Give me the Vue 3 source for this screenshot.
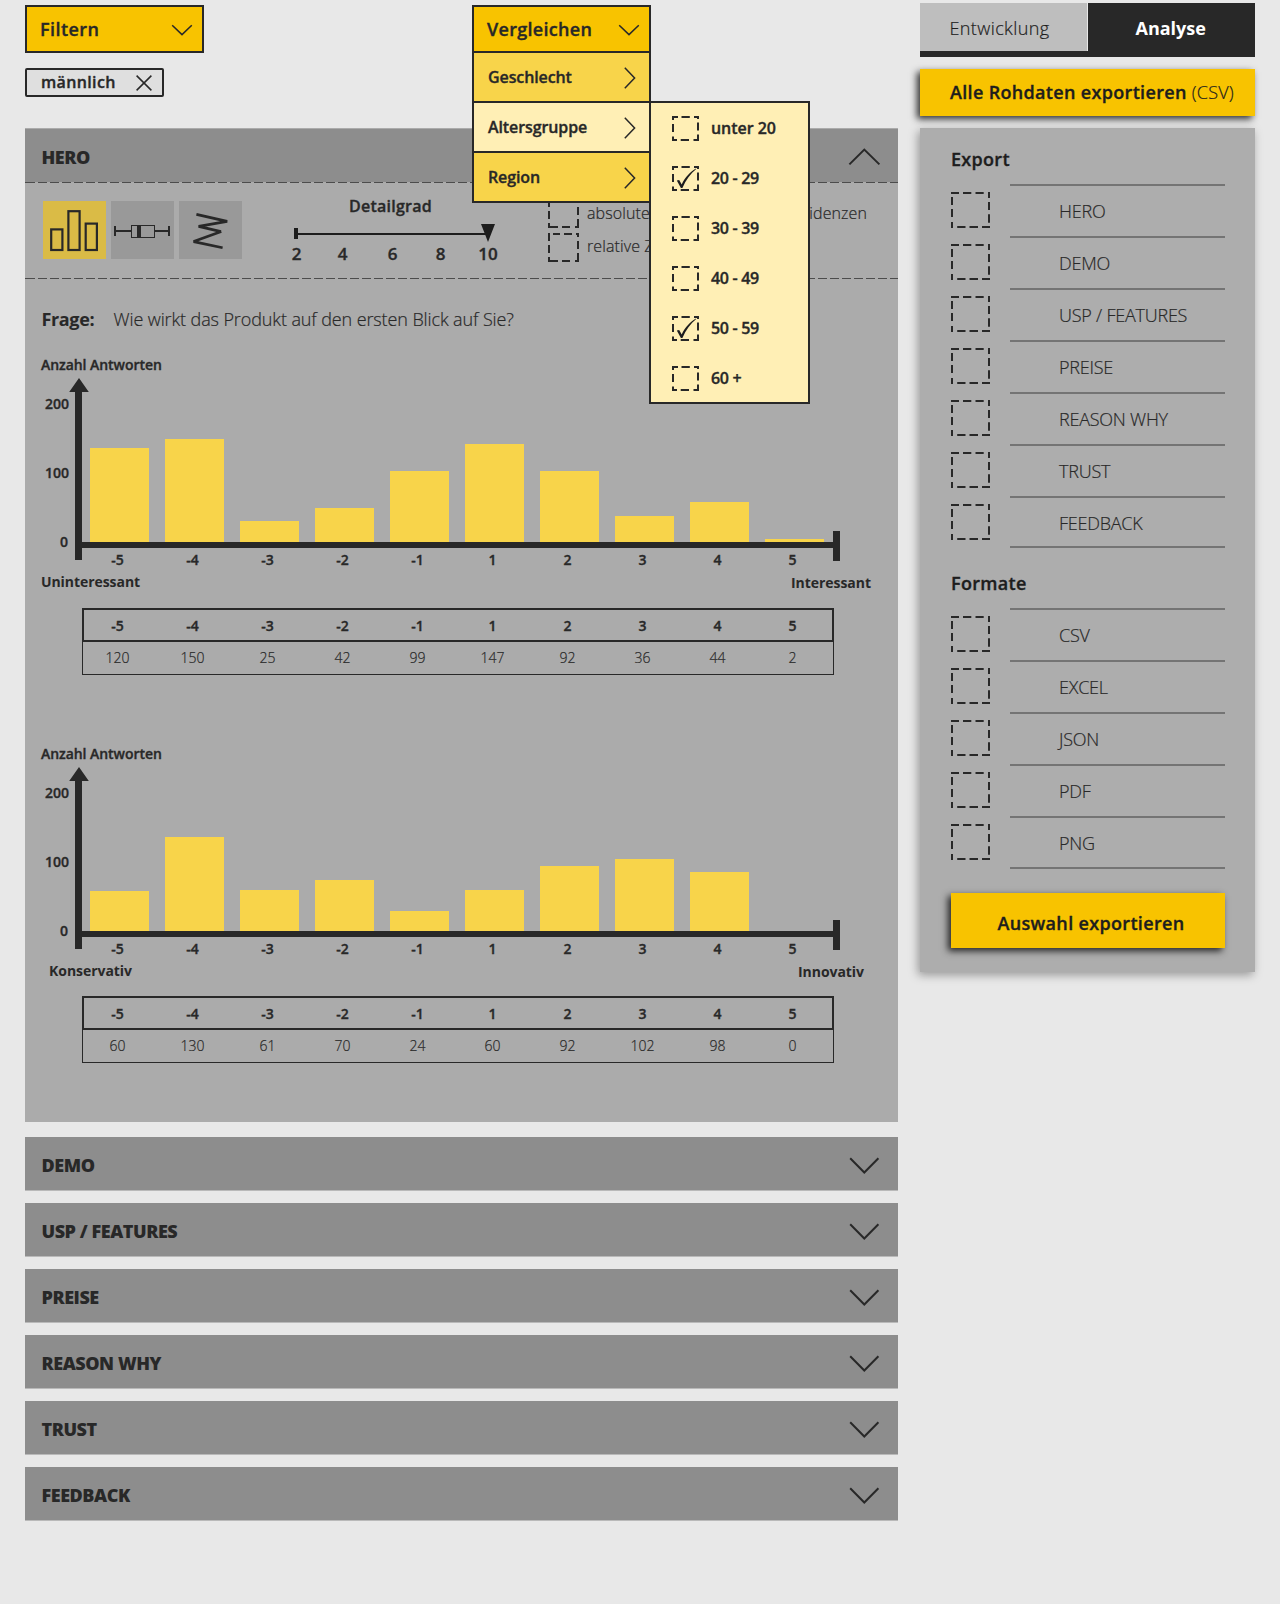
<script setup>
const sections = ['DEMO', 'USP / FEATURES', 'PREISE', 'REASON WHY', 'TRUST', 'FEEDBACK']
const exportItems = ['HERO', ...sections]
const formats = ['CSV', 'EXCEL', 'JSON', 'PDF', 'PNG']
const scale = ['-5', '-4', '-3', '-2', '-1', '1', '2', '3', '4', '5']
const compareItems = [
  { label: 'Geschlecht', open: false },
  { label: 'Altersgruppe', open: true },
  { label: 'Region', open: false },
]
const ages = [
  { label: 'unter 20', on: false },
  { label: '20 - 29', on: true },
  { label: '30 - 39', on: false },
  { label: '40 - 49', on: false },
  { label: '50 - 59', on: true },
  { label: '60 +', on: false },
]
const charts = [
  {
    left: 'Uninteressant',
    right: 'Interessant',
    bars: [94, 103, 21, 34, 71, 98, 71, 26, 40, 3],
    values: [120, 150, 25, 42, 99, 147, 92, 36, 44, 2],
  },
  {
    left: 'Konservativ',
    right: 'Innovativ',
    bars: [40, 94, 41, 51, 20, 41, 65, 72, 59, 0],
    values: [60, 130, 61, 70, 24, 60, 92, 102, 98, 0],
  },
]
const dashedBox =
  'M0 1h8M12 1h8.3M24.5 1h8.2M38 0v6M38 10v8M38 22.3v8.4M39 35h-8M27 35h-8.5M14.5 35h-8.3M1 36v-6M1 25v-8M1 13v-8'
const dashedMedium =
  'M0 1h2M5 1h7M16 1h8M28 1h3M30 0v4M30 8v8M30 20v9M31 28h-4M22 28h-8M10 28h-8M1 29v-5M1 20v-8M1 8v-6'
const dashedSmall =
  'M0 1h6M9.5 1h8.3M22 1h5M26 0v3M26 6.5v8M26 18.5v6.5M27 24h-5.5M17 24h-8.3M5 24h-5M1 25v-4.5M1 16v-8M1 4v-4'
</script>

<template>
  <div class="page">
    <div class="main">
      <header class="toolbar">
        <div class="filter-col">
          <button class="drop filter-btn">
            <span>Filtern</span>
            <svg class="chev" width="22" height="12" viewBox="0 0 22 12"><path d="M1.2 1.2 11 10.6 20.8 1.2" /></svg>
          </button>
          <div class="tag">
            <span>männlich</span>
            <svg width="16" height="16" viewBox="0 0 16 16"><path d="M.6.6 15.4 15.4M15.4.6.6 15.4" /></svg>
          </div>
        </div>
        <div class="compare">
          <button class="drop compare-btn">
            <span>Vergleichen</span>
            <svg class="chev" width="22" height="12" viewBox="0 0 22 12"><path d="M1.2 1.2 11 10.6 20.8 1.2" /></svg>
          </button>
          <div class="menu">
            <div v-for="m in compareItems" :key="m.label" class="menu-item" :class="{ open: m.open }">
              <span>{{ m.label }}</span>
              <svg width="12" height="22" viewBox="0 0 12 22"><path d="M.8.8 10.6 11 .8 21.2" /></svg>
            </div>
            <div class="submenu">
              <div v-for="a in ages" :key="a.label" class="age">
                <svg width="27" height="25" viewBox="0 0 27 25">
                  <path class="dash" :d="dashedSmall" />
                  <path v-if="a.on" class="tick" d="M4.8 14.6 7.2 14 9.7 18.4C13 11.5 18.5 5.6 24 2.6L24.2 3.1C18.6 7.6 13.8 14 10.4 22L8.9 22Z" />
                </svg>
                <span>{{ a.label }}</span>
              </div>
            </div>
          </div>
        </div>
      </header>

      <section class="panel">
        <div class="bar hero-bar">
          <h2>HERO</h2>
          <svg width="34" height="20" viewBox="0 0 34 20"><path d="M2.4 17.4 17.3 2.6 32.4 17.4" /></svg>
        </div>
        <div class="rule"></div>
        <div class="controls">
          <div class="tiles">
            <div class="tile active">
              <svg width="63" height="58" viewBox="0 0 63 58">
                <g fill="none" stroke="#282828" stroke-width="2.2">
                  <rect x="8.2" y="28.4" width="11.2" height="20.6" />
                  <rect x="25.4" y="10.2" width="11.2" height="38.8" />
                  <rect x="42.7" y="22.6" width="11.2" height="26.4" />
                </g>
              </svg>
            </div>
            <div class="tile">
              <svg width="63" height="58" viewBox="0 0 63 58">
                <path d="M4 25v10M58 25v10M4 30h16M44 30h14" fill="none" stroke="#282828" stroke-width="2" />
                <rect x="20.5" y="24.5" width="23" height="12" fill="none" stroke="#282828" />
                <path d="M26 24h4v13h-4z" fill="#282828" />
              </svg>
            </div>
            <div class="tile">
              <svg width="63" height="58" viewBox="0 0 63 58">
                <path d="M17.4 13.4 48.2 20.4 19.6 25.4 42 30.6M42.3 30.6 14.6 40.6 43.6 46.8" fill="none" stroke="#282828" stroke-width="2.7" stroke-linejoin="bevel" />
              </svg>
            </div>
          </div>
          <div class="slider">
            <p>Detailgrad</p>
            <svg width="222" height="18" viewBox="0 0 222 18"><path d="M21 4h4v11h-4zM25 9h190v2H25zM208 0h14l-7 18z" fill="#1d1d1d" /></svg>
            <div class="steps"><span>2</span><span>4</span><span>6</span><span>8</span><span>10</span></div>
          </div>
          <div class="options">
            <div class="option">
              <svg width="31" height="29" viewBox="0 0 31 29"><path class="dash" :d="dashedMedium" /></svg>
              <span>absolute Zahlen</span>
            </div>
            <div class="option">
              <svg width="31" height="29" viewBox="0 0 31 29"><path class="dash" :d="dashedMedium" /></svg>
              <span>relative Zahlen</span>
            </div>
          </div>
          <div class="evidence">Evidenzen</div>
        </div>
        <div class="rule"></div>
        <p class="question"><b>Frage:</b><span>Wie wirkt das Produkt auf den ersten Blick auf Sie?</span></p>

        <figure v-for="c in charts" :key="c.left" class="chart">
          <figcaption>Anzahl Antworten</figcaption>
          <div class="plot">
            <div class="y-labels"><span>200</span><span>100</span><span class="zero">0</span></div>
            <svg class="y-axis" width="20" height="182" viewBox="0 0 20 182"><path d="M10 0 19.8 14H13V182H6V14H.2z" fill="#282828" /></svg>
            <div class="field">
              <div class="bars">
                <div v-for="(h, i) in c.bars" :key="i" class="bar-value" :style="{ height: h + 'px' }"></div>
              </div>
              <div class="ticks"><span v-for="s in scale" :key="s">{{ s }}</span></div>
            </div>
            <div class="end-cap"></div>
          </div>
          <div class="poles"><span>{{ c.left }}</span><span class="right">{{ c.right }}</span></div>
          <div class="table">
            <div class="thead"><span v-for="s in scale" :key="s">{{ s }}</span></div>
            <div class="tbody"><span v-for="(v, i) in c.values" :key="i">{{ v }}</span></div>
          </div>
        </figure>
      </section>

      <div class="accordion">
        <div v-for="s in sections" :key="s" class="bar">
          <h2>{{ s }}</h2>
          <svg width="34" height="20" viewBox="0 0 34 20"><path d="M3.2 3.3 17.3 17.5 31.4 3.3" /></svg>
        </div>
      </div>
    </div>

    <aside>
      <nav class="tabs">
        <a>Entwicklung</a>
        <a class="on">Analyse</a>
      </nav>
      <button class="cta raw"><span>Alle Rohdaten exportieren</span>&nbsp;<i>(CSV)</i></button>
      <div class="export">
        <h3>Export</h3>
        <ul>
          <li v-for="e in exportItems" :key="e">
            <svg width="39" height="36" viewBox="0 0 39 36"><path class="dash" :d="dashedBox" /></svg>
            <span>{{ e }}</span>
          </li>
        </ul>
        <h3>Formate</h3>
        <ul class="formats">
          <li v-for="f in formats" :key="f">
            <svg width="39" height="36" viewBox="0 0 39 36"><path class="dash" :d="dashedBox" /></svg>
            <span>{{ f }}</span>
          </li>
        </ul>
        <button class="cta pick"><span>Auswahl exportieren</span></button>
      </div>
    </aside>
  </div>
</template>

<style>
body { margin: 0; background: #e8e8e8; }
</style>

<style scoped>
* { box-sizing: border-box; margin: 0; padding: 0; }
.page {
  display: flex;
  gap: 22px;
  width: 1280px;
  height: 1604px;
  padding-left: 25px;
  background: #e8e8e8;
  color: #282828;
  font-family: "Open Sans", "Noto Sans", sans-serif;
  -webkit-text-stroke: .2px currentColor;
}
svg { display: block; flex: none; }
button { font: inherit; color: inherit; border: 0; }
.main { width: 873px; }
.dash { fill: none; stroke: #282828; stroke-width: 2; }
.tick { fill: #1d1d1d; }

.drop, .tag, .menu-item, .age, .slider, figcaption, .y-labels, .ticks, .thead, .cta, h3 {
  -webkit-text-stroke-width: .35px;
}
h2, b, .poles, .tabs .on { -webkit-text-stroke-width: 0; }

.toolbar { display: flex; gap: 268px; height: 128px; padding-top: 5px; }
.filter-col { width: 179px; }
.drop {
  display: flex; align-items: center; justify-content: space-between;
  width: 179px; height: 48px; padding: 0 9px 0 13px;
  border: 2px solid #282828; background: #f8c300;
  font-size: 18px; font-weight: 600; letter-spacing: .3px;
}
.filter-btn { letter-spacing: .45px; }
.chev, .menu-item svg, .tag svg { fill: none; stroke: #282828; stroke-width: 1.5; }
.chev { margin-top: 2px; }
.tag {
  display: flex; align-items: center; justify-content: space-between;
  width: 139px; height: 29px; margin-top: 15px; padding: 0 10px 0 14px;
  border: 2px solid #282828; border-radius: 2px; background: #dfdfdf;
  font-size: 16px; font-weight: 600; letter-spacing: .35px;
}
.tag span { line-height: 22px; margin-bottom: 2px; }
.compare { position: relative; z-index: 2; width: 179px; height: 48px; }
.menu { position: absolute; left: 0; top: 46px; width: 179px; border: 2px solid #282828; }
.menu-item {
  display: flex; align-items: center; justify-content: space-between;
  height: 50px; padding: 0 13px 0 14px;
  border-bottom: 2px solid #282828; background: #f8d44a;
  font-size: 16px; font-weight: 600; letter-spacing: -.1px;
}
.menu-item svg { margin-top: 1px; }
.menu-item:nth-child(3) { height: 48px; border-bottom: 0; }
.menu-item.open { background: #ffefb5; }
.submenu {
  position: absolute; left: 175px; top: 48px; width: 161px; height: 303px;
  border: 2px solid #282828; background: #ffefb5;
}
.age {
  display: flex; align-items: center; gap: 12px; height: 50px; padding-left: 21px;
  font-size: 16px; font-weight: 600; letter-spacing: -.3px;
}
.age:first-child { letter-spacing: -.05px; }

.panel { height: 994px; padding-top: 1px; background: #ababab; }
.bar {
  display: flex; align-items: center; justify-content: space-between;
  height: 53px; padding: 3px 17px 0 16.5px; background: #8d8d8d;
}
.bar h2 { font-size: 18px; font-weight: 800; letter-spacing: -.45px; }
.bar svg { fill: none; stroke: #282828; stroke-width: 2; }
.rule { height: 1px; background: repeating-linear-gradient(90deg, #4c4c4c 0 9px, transparent 9px 12px) 1px 0; }
.controls { display: flex; height: 95px; padding-left: 18px; }
.tiles { display: flex; gap: 5px; padding-top: 18px; }
.tile { width: 63px; height: 58px; background: #999; }
.tile.active { background: #dabb46; }
.slider { width: 242px; margin-left: 31px; padding-top: 12px; }
.slider p { height: 22px; margin-bottom: 7px; padding-left: 76px; line-height: 22px; font-size: 16px; font-weight: 600; letter-spacing: .25px; }
.steps { display: grid; grid-template-columns: 46px 46px 54px 42px 53px; height: 22px; margin: 1px 0 0 .5px; line-height: 22px; font-size: 17px; font-weight: 600; text-align: center; }
.options { display: flex; flex-direction: column; gap: 5px; margin-left: 33px; padding-top: 16px; }
.option { display: flex; align-items: center; gap: 8px; height: 29px; font-size: 16px; font-weight: 300; letter-spacing: .1px; }
.option span { margin-top: -2px; }
.option:last-child span { margin-top: -3px; }
.evidence { margin-left: auto; padding: 19px 31px 0 0; line-height: 22px; font-size: 16px; font-weight: 300; letter-spacing: .1px; }
.question { display: flex; height: 75px; padding: 28px 0 0 16.5px; line-height: 24px; font-size: 18px; font-weight: 300; letter-spacing: -.11px; }
.question b { width: 72px; font-weight: 700; letter-spacing: -.35px; }

.chart { height: 389px; font-size: 14px; }
figcaption { height: 24px; padding-left: 16px; line-height: 22px; font-weight: 600; letter-spacing: -.05px; }
.plot { display: flex; height: 182px; }
.y-labels { display: flex; flex-direction: column; width: 44px; padding: 16px 0 0; text-align: right; font-weight: 600; }
.y-labels span { flex: none; height: 69px; line-height: 20px; }
.y-labels .zero { height: 20px; padding-right: 1px; }
.y-axis { margin-right: -7px; }
.field { width: 751px; }
.bars { display: flex; align-items: flex-end; gap: 16px; height: 170px; padding-left: 8px; border-bottom: 6px solid #282828; }
.bar-value { width: 59px; background: #f8d44a; }
.ticks { display: flex; margin-left: -2px; }
.ticks span { width: 75px; line-height: 24px; text-align: center; font-weight: 600; }
.end-cap { width: 7px; height: 30px; margin-top: 153px; background: #282828; }
.poles { display: flex; justify-content: space-between; height: 48px; padding: 11px 7px 0 5.5px; line-height: 21px; font-weight: 700; letter-spacing: -.05px; }
.chart:last-of-type .poles { height: 47px; }
.poles span { width: 120px; text-align: center; }
.poles .right { padding-top: 1px; }
.table { width: 752px; margin-left: 57px; }
.thead, .tbody { display: flex; }
.thead span, .tbody span { width: 75px; text-align: center; flex: none; }
.thead span:first-child { margin-left: -4px; }
.tbody span:first-child { margin-left: -3px; }
.thead { height: 34px; border: 2px solid #282828; font-weight: 600; line-height: 32px; }
.tbody { height: 33px; border: 1px solid #282828; border-top: 0; font-weight: 300; line-height: 32px; }

.accordion { display: flex; flex-direction: column; gap: 12px; padding-top: 15px; }
.accordion .bar { height: 54px; border-bottom: 1px solid #b9b9b9; }

aside { width: 335px; padding-top: 3px; }
.tabs { display: flex; gap: 1px; height: 54px; border-bottom: 6px solid #282828; font-size: 18px; font-weight: 300; }
.tabs a { width: 167px; height: 48px; background: #bebebe; color: #1d1d1d; line-height: 51px; padding-left: 29.5px; letter-spacing: .4px; }
.tabs .on { background: #282828; color: #fff; padding-left: 47.5px; font-weight: 700; letter-spacing: 0; }
.cta { display: flex; background: #f8c300; color: #1d1d1d; font-size: 18px; font-weight: 600; letter-spacing: .33px; box-shadow: -3px 3px 7px rgba(0, 0, 0, .8); }
.raw { width: 335px; height: 47px; margin: 12px 0; padding-left: 30px; line-height: 46px; }
.raw i { font-style: normal; font-weight: 300; letter-spacing: .2px; -webkit-text-stroke-width: .2px; }
.export { height: 844px; padding: 19px 30px 0 31px; background: #adadad; box-shadow: -2px 3px 9px rgba(0, 0, 0, .35); }
h3 { height: 37px; line-height: 24px; font-size: 18px; font-weight: 600; letter-spacing: .3px; color: #1d1d1d; }
ul + h3 { height: 34px; line-height: 18px; }
ul { list-style: none; height: 390px; }
li { display: flex; height: 52px; gap: 20px; font-size: 18px; font-weight: 300; }
li svg { margin-top: 8px; }
li span { width: 215px; padding-left: 49px; line-height: 51px; border-top: 2px solid #747474; letter-spacing: -.23px; }
li:last-child span { border-bottom: 2px solid #747474; }
.formats { height: 261px; }
.formats li:last-child { height: 53px; }
.pick { width: 274px; height: 55px; margin-top: 24px; padding-left: 46.5px; line-height: 60px; }
</style>
